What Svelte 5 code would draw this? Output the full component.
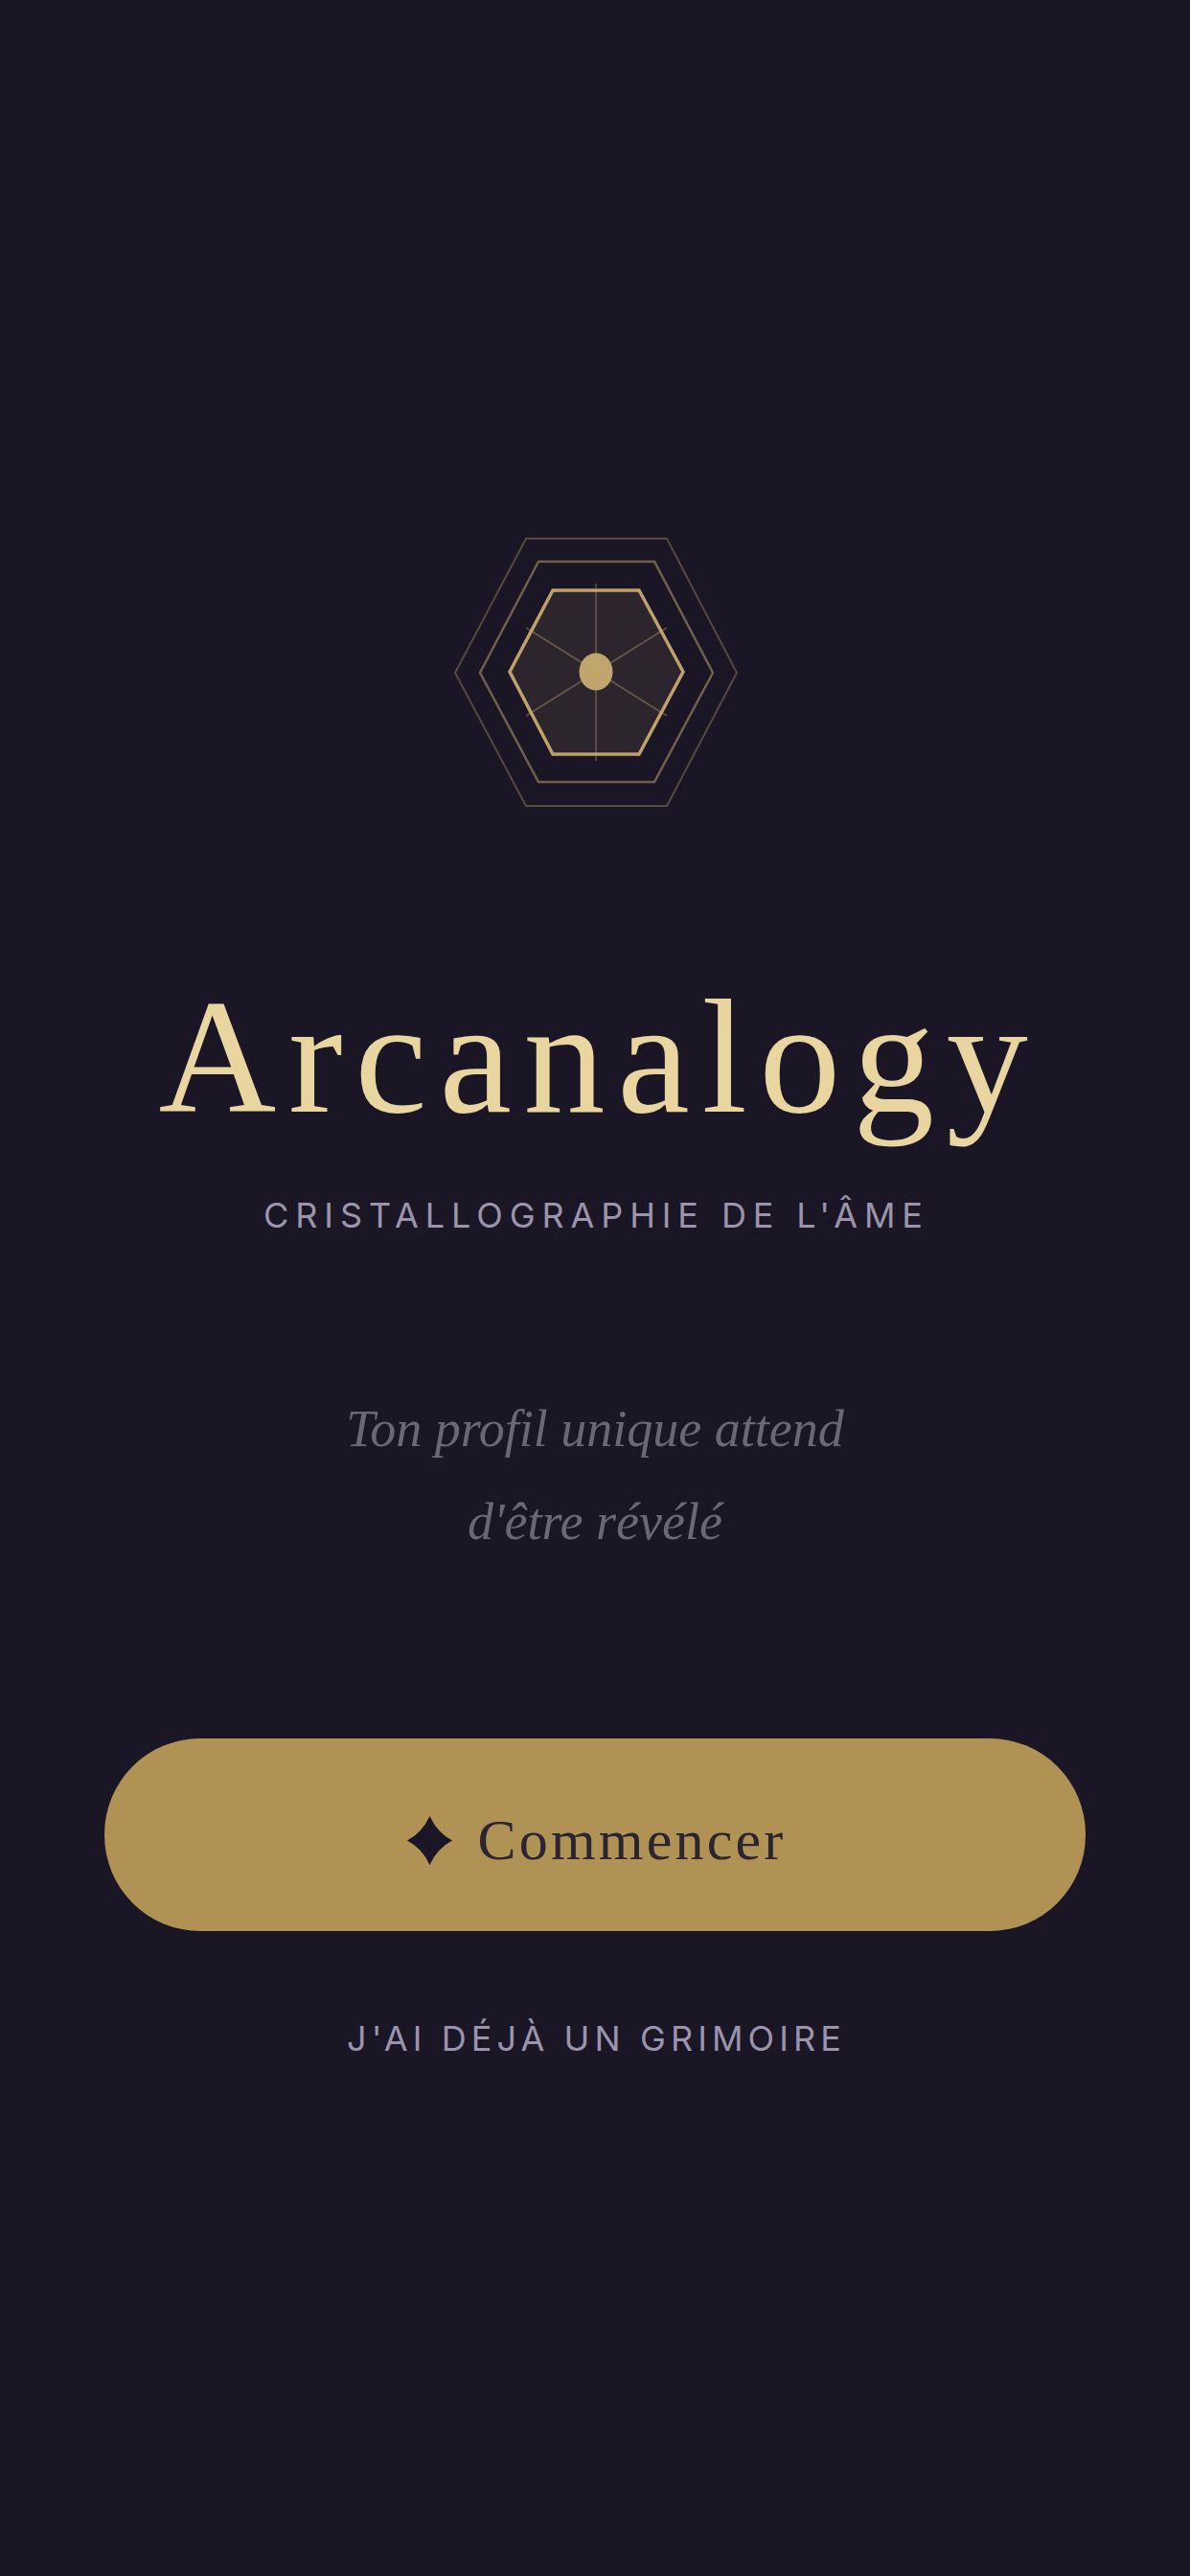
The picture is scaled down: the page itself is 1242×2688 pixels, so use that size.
<script>
  const tagline = ["Ton profil unique attend", "d'être révélé"];
</script>

<main class="page">
  <svg class="crystal" viewBox="0 0 300 300" width="300" height="300" aria-hidden="true">
    <polygon class="hex-outer" points="77,10 224,10 297,150 224,289 77,289 3,150" />
    <polygon class="hex-mid" points="90,34 211,34 272,150 211,264 90,264 29,150" />
    <polygon class="hex-inner" points="105,64 195,64 241,149 195,235 105,235 60,149" />
    <g class="spokes">
      <line x1="150" y1="57" x2="150" y2="242" />
      <line x1="77" y1="103" x2="224" y2="195" />
      <line x1="224" y1="103" x2="77" y2="195" />
    </g>
    <ellipse class="core" cx="150" cy="149" rx="17.5" ry="19.5" />
  </svg>

  <h1>Arcanalogy</h1>
  <p class="subtitle">CRISTALLOGRAPHIE DE L'ÂME</p>

  <p class="tagline">
    {#each tagline as line}
      <span>{line}</span>
    {/each}
  </p>

  <button class="start">
    <svg class="star" viewBox="0 0 47 51" width="47" height="51" aria-hidden="true">
      <path d="M23.5 0 Q31 17 47 25.5 Q31 34 23.5 51 Q16 34 0 25.5 Q16 17 23.5 0 Z" />
    </svg>
    <span>Commencer</span>
  </button>

  <button class="grimoire">J'AI DÉJÀ UN GRIMOIRE</button>
</main>

<style>
  :global(body) {
    margin: 0;
    background: #1a1625;
  }

  .page {
    height: 2688px;
    box-sizing: border-box;
    padding-top: 552px;
    display: flex;
    flex-direction: column;
    align-items: center;
    background: #1a1625;
    overflow: hidden;
  }

  .crystal {
    display: block;
    flex: none;
    transform: translateX(1px);
  }

  .hex-outer {
    fill: none;
    stroke: #c9a96e;
    stroke-width: 2;
    opacity: 0.35;
  }

  .hex-mid {
    fill: none;
    stroke: #c9a96e;
    stroke-width: 2.5;
    opacity: 0.5;
  }

  .hex-inner {
    fill: rgba(201, 160, 120, 0.12);
    stroke: #c9a96e;
    stroke-width: 3.5;
    opacity: 0.95;
  }

  .spokes line {
    stroke: #c9a96e;
    stroke-width: 1.5;
    opacity: 0.4;
  }

  .core {
    fill: #c0a66c;
  }

  h1 {
    margin: 151px 0 0;
    padding-left: 9px;
    font-family: "Liberation Serif", serif;
    font-weight: 400;
    font-size: 170px;
    line-height: 200px;
    letter-spacing: 12.7px;
    color: #e8d5a0;
  }

  .subtitle {
    margin: 43px 0 0;
    padding-left: 3px;
    font-family: Inter, sans-serif;
    font-weight: 400;
    font-size: 36px;
    line-height: 44px;
    letter-spacing: 6.9px;
    color: #9b94ad;
  }

  .tagline {
    margin: 153px 0 0;
    display: flex;
    flex-direction: column;
    align-items: center;
    font-family: "Liberation Serif", serif;
    font-style: italic;
    font-size: 54px;
    line-height: 97px;
    color: #6c6778;
  }

  .start {
    margin-top: 177px;
    width: 1024px;
    height: 201px;
    box-sizing: border-box;
    padding: 11px 0 0 4px;
    flex: none;
    display: flex;
    align-items: center;
    justify-content: center;
    gap: 26px;
    border: none;
    border-radius: 100px;
    background: #b09255;
    font-family: "Liberation Serif", serif;
    font-size: 60px;
    letter-spacing: 3.2px;
    color: #2a2530;
  }

  .star {
    fill: #1a1625;
    flex: none;
  }

  .grimoire {
    margin-top: 90px;
    border: none;
    background: none;
    padding: 0 0 0 3px;
    font-family: Inter, sans-serif;
    font-weight: 400;
    font-size: 36px;
    line-height: 44px;
    letter-spacing: 5.1px;
    color: #9b94ad;
  }
</style>
